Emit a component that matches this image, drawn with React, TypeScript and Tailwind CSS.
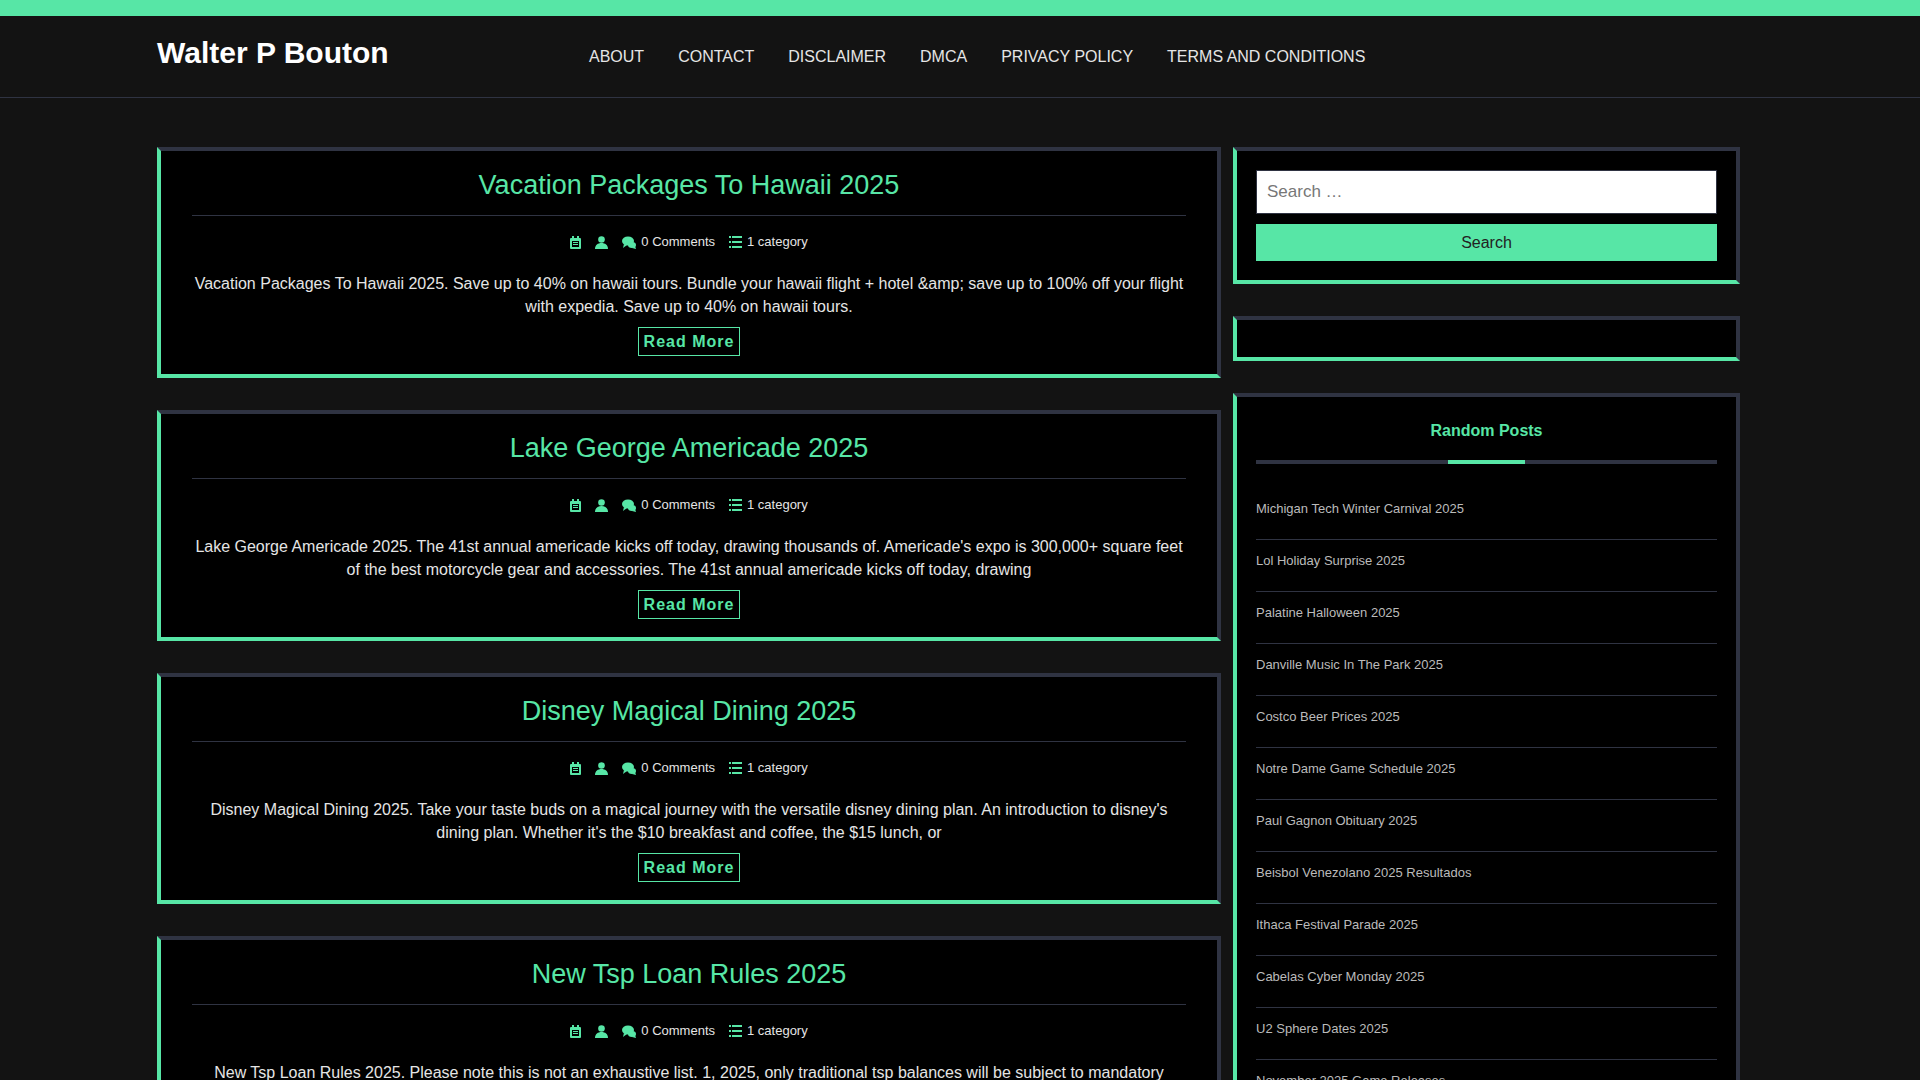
import React from 'react';

const posts = [
  {
    title: 'Vacation Packages To Hawaii 2025',
    body: 'Vacation Packages To Hawaii 2025. Save up to 40% on hawaii tours. Bundle your hawaii flight + hotel &amp; save up to 100% off your flight with expedia. Save up to 40% on hawaii tours.',
  },
  {
    title: 'Lake George Americade 2025',
    body: "Lake George Americade 2025. The 41st annual americade kicks off today, drawing thousands of. Americade's expo is 300,000+ square feet of the best motorcycle gear and accessories. The 41st annual americade kicks off today, drawing",
  },
  {
    title: 'Disney Magical Dining 2025',
    body: "Disney Magical Dining 2025. Take your taste buds on a magical journey with the versatile disney dining plan. An introduction to disney's dining plan. Whether it's the $10 breakfast and coffee, the $15 lunch, or",
  },
  {
    title: 'New Tsp Loan Rules 2025',
    body: 'New Tsp Loan Rules 2025. Please note this is not an exhaustive list. 1, 2025, only traditional tsp balances will be subject to mandatory withdrawals. Your investment in the l 2025 fund will help you',
  },
];

const random = [
  'Michigan Tech Winter Carnival 2025',
  'Lol Holiday Surprise 2025',
  'Palatine Halloween 2025',
  'Danville Music In The Park 2025',
  'Costco Beer Prices 2025',
  'Notre Dame Game Schedule 2025',
  'Paul Gagnon Obituary 2025',
  'Beisbol Venezolano 2025 Resultados',
  'Ithaca Festival Parade 2025',
  'Cabelas Cyber Monday 2025',
  'U2 Sphere Dates 2025',
  'November 2025 Game Releases',
];

const nav = ['ABOUT', 'CONTACT', 'DISCLAIMER', 'DMCA', 'PRIVACY POLICY', 'TERMS AND CONDITIONS'];

const box = 'bg-black border-t-[4px] border-r-[4px] border-t-[#2f3342] border-r-[#2f3342] border-l-[4px] border-b-[4px] border-l-[#57e6a6] border-b-[#57e6a6]';

function Meta() {
  return (
    <div className="flex items-center justify-center gap-[14px] text-[13px] leading-[16px] text-[#e5e5e5] mt-[18px]">
      <svg width="11" height="13" viewBox="0 0 11 13" fill="#57e6a6"><rect x="0" y="2" width="11" height="11" rx="1" /><rect x="2" y="0" width="2" height="3" /><rect x="7" y="0" width="2" height="3" /><rect x="2" y="5" width="7" height="6" fill="#000" /><rect x="3" y="6" width="5" height="1" /><rect x="3" y="8" width="5" height="1" /></svg>
      <svg width="13" height="13" viewBox="0 0 13 13" fill="#57e6a6"><circle cx="6.5" cy="3.5" r="3.3" /><path d="M0 13c0-4 3-6 6.5-6S13 9 13 13z" /></svg>
      <span className="flex items-center gap-[4px]">
        <svg width="15" height="13" viewBox="0 0 15 13" fill="#57e6a6"><ellipse cx="6" cy="5" rx="6" ry="4.5" /><path d="M2 8l-1 4 4-3z" /><path d="M10 12l4 1-1-3z" /><ellipse cx="10" cy="9" rx="4" ry="3" /></svg>
        0 Comments
      </span>
      <span className="flex items-center gap-[5px]">
        <svg width="13" height="12" viewBox="0 0 13 12" fill="#57e6a6"><rect x="0" y="0" width="2" height="2" /><rect x="3" y="0" width="10" height="2" /><rect x="0" y="5" width="2" height="2" /><rect x="3" y="5" width="10" height="2" /><rect x="0" y="10" width="2" height="2" /><rect x="3" y="10" width="10" height="2" /></svg>
        1 category
      </span>
    </div>
  );
}

export default function App() {
  return (
    <div className="min-h-screen bg-[#131313] font-[Liberation_Sans,Arial,sans-serif]">
      <div className="h-[16px] bg-[#57e6a6]" />
      <header className="h-[82px] border-b border-[#2f3342] flex items-center">
        <div className="w-[1583px] ml-[157px] flex items-center">
          <div className="text-[30px] font-bold text-white w-[410px] -mt-[8px]">Walter P Bouton</div>
          <nav className="flex gap-[34px] text-[16px] text-[#e5e5e5] ml-[22px]">
            {nav.map((n) => (
              <a key={n}>{n}</a>
            ))}
          </nav>
        </div>
      </header>

      <div className="w-[1583px] ml-[157px] mt-[49px] flex gap-[12px] items-start">
        <main className="w-[1064px] flex flex-col gap-[32px]">
          {posts.map((p) => (
            <article key={p.title} className={`${box} px-[31px] pt-[18px] pb-[18px]`}>
              <h2 className="text-center text-[27px] leading-[32px] text-[#57e6a6] pb-[14px] border-b border-[#2f3342]">{p.title}</h2>
              <Meta />
              <p className="text-center text-[16px] leading-[23px] text-[#e5e5e5] mt-[22px]">{p.body}</p>
              <div className="flex justify-center mt-[9px]">
                <a className="border border-[#57e6a6] text-[#57e6a6] text-[16px] font-bold tracking-[1px] px-[5px] h-[29px] leading-[27px]">Read More</a>
              </div>
            </article>
          ))}
        </main>

        <aside className="flex-1 flex flex-col gap-[32px]">
          <div className={`${box} px-[19px] pt-[19px] pb-[19px]`}>
            <input className="w-full h-[44px] bg-white border border-[#2f3342] px-[10px] text-[17px] outline-none placeholder:text-[#777]" placeholder="Search …" />
            <button className="w-full h-[37px] bg-[#57e6a6] mt-[10px] text-[16px] text-[#222]">Search</button>
          </div>
          <div className={`${box} h-[45px]`} />
          <div className={`${box} px-[19px] pt-[22px]`}>
            <h3 className="text-center text-[16px] font-bold text-[#57e6a6]">Random Posts</h3>
            <div className="mt-[17px] h-[4px] bg-[#2f3342] flex justify-center">
              <div className="w-[77px] bg-[#57e6a6]" />
            </div>
            <ul className="mt-[24px]">
              {random.map((r) => (
                <li key={r} className="text-[13px] text-[#bbbbbb] h-[52px] pt-[11px] border-b border-[#2f3342]">{r}</li>
              ))}
            </ul>
          </div>
        </aside>
      </div>
    </div>
  );
}
